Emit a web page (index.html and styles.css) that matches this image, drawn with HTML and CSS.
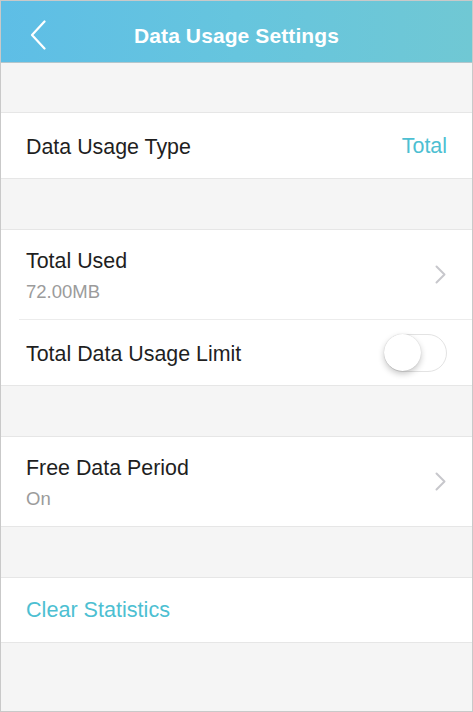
FILE: index.html
```html
<!DOCTYPE html>
<html>
<head>
<meta charset="utf-8">
<link rel="stylesheet" href="styles.css">
</head>
<body>
<div class="screen">
  <header class="header">
    <svg class="back" width="16" height="30" viewBox="0 0 16 30"><path d="M14.5 1.5 L2 15 L14.5 28.5" fill="none" stroke="#fff" stroke-width="2.2" stroke-linecap="round" stroke-linejoin="round"/></svg>
    <h1 class="title">Data Usage Settings</h1>
  </header>
  <div class="gap first"></div>
  <section class="group">
    <div class="row single">
      <span class="label">Data Usage Type</span>
      <span class="value">Total</span>
    </div>
  </section>
  <div class="gap"></div>
  <section class="group">
    <div class="row double">
      <div class="texts">
        <span class="label">Total Used</span>
        <span class="sub">72.00MB</span>
      </div>
      <svg class="chev" width="11" height="19" viewBox="0 0 11 19"><path d="M1.5 1.5 L9.5 9.5 L1.5 17.5" fill="none" stroke="#c7c7cc" stroke-width="2" stroke-linecap="round" stroke-linejoin="round"/></svg>
    </div>
    <div class="divider"></div>
    <div class="row single">
      <span class="label">Total Data Usage Limit</span>
      <div class="toggle"><div class="knob"></div></div>
    </div>
  </section>
  <div class="gap"></div>
  <section class="group">
    <div class="row double">
      <div class="texts">
        <span class="label">Free Data Period</span>
        <span class="sub">On</span>
      </div>
      <svg class="chev" width="11" height="19" viewBox="0 0 11 19"><path d="M1.5 1.5 L9.5 9.5 L1.5 17.5" fill="none" stroke="#c7c7cc" stroke-width="2" stroke-linecap="round" stroke-linejoin="round"/></svg>
    </div>
  </section>
  <div class="gap"></div>
  <section class="group">
    <div class="row single clear">
      <span class="action">Clear Statistics</span>
    </div>
  </section>
</div>
</body>
</html>
```

FILE: styles.css
```css
* { box-sizing: border-box; }
html, body { margin: 0; padding: 0; }
body {
  font-family: "Liberation Sans", Arial, sans-serif;
  background: #f5f5f5;
}
.screen {
  width: 473px;
  height: 712px;
  border: 1px solid #c9c9c9;
  background: #f5f5f5;
  overflow: hidden;
}
.header {
  height: 62px;
  padding-top: 8px;
  background: linear-gradient(90deg, #5ebee6 0%, #66c5de 50%, #70c8d4 100%);
  border-bottom: 1px solid #b3c6cc;
  display: flex;
  align-items: center;
  justify-content: center;
  position: relative;
}
.back {
  position: absolute;
  left: 29px;
  top: 19px;
}
.title {
  margin: 0;
  color: #fff;
  font-size: 21px;
  font-weight: 700;
  letter-spacing: 0.1px;
}
.gap { height: 50px; }
.gap.first { height: 49px; }
.group {
  background: #fff;
  border-top: 1px solid #e6e6e6;
  border-bottom: 1px solid #e6e6e6;
}
.row {
  display: flex;
  align-items: center;
  justify-content: space-between;
  padding: 0 25px 0 25px;
}
.row.single { height: 65px; padding-top: 2px; }
.row.clear { height: 64px; padding-top: 0; }
.row.double { height: 89px; padding-top: 2px; }
.texts {
  display: flex;
  flex-direction: column;
  gap: 7px;
}
.label {
  font-size: 21.4px;
  line-height: 26px;
  color: #1f1f1f;
}
.sub {
  font-size: 18.5px;
  line-height: 22px;
  color: #9b9b9b;
}
.value {
  font-size: 21.4px;
  color: #4dbfd2;
}
.action {
  font-size: 21.6px;
  color: #4dbfd2;
}
.chev { margin-right: 1px; margin-top: -2px; }
.divider {
  height: 1px;
  background: #ececec;
  margin-left: 18px;
}
.toggle {
  width: 63px;
  height: 38px;
  border-radius: 19px;
  border: 1.5px solid #e3e3e3;
  background: #fff;
  position: relative;
  margin-top: -2px;
}
.knob {
  position: absolute;
  left: -1px;
  top: -1px;
  width: 37px;
  height: 37px;
  border-radius: 50%;
  background: #fff;
  box-shadow: 0 3px 6px rgba(0,0,0,0.22), 0 0 1px rgba(0,0,0,0.2);
}
```
